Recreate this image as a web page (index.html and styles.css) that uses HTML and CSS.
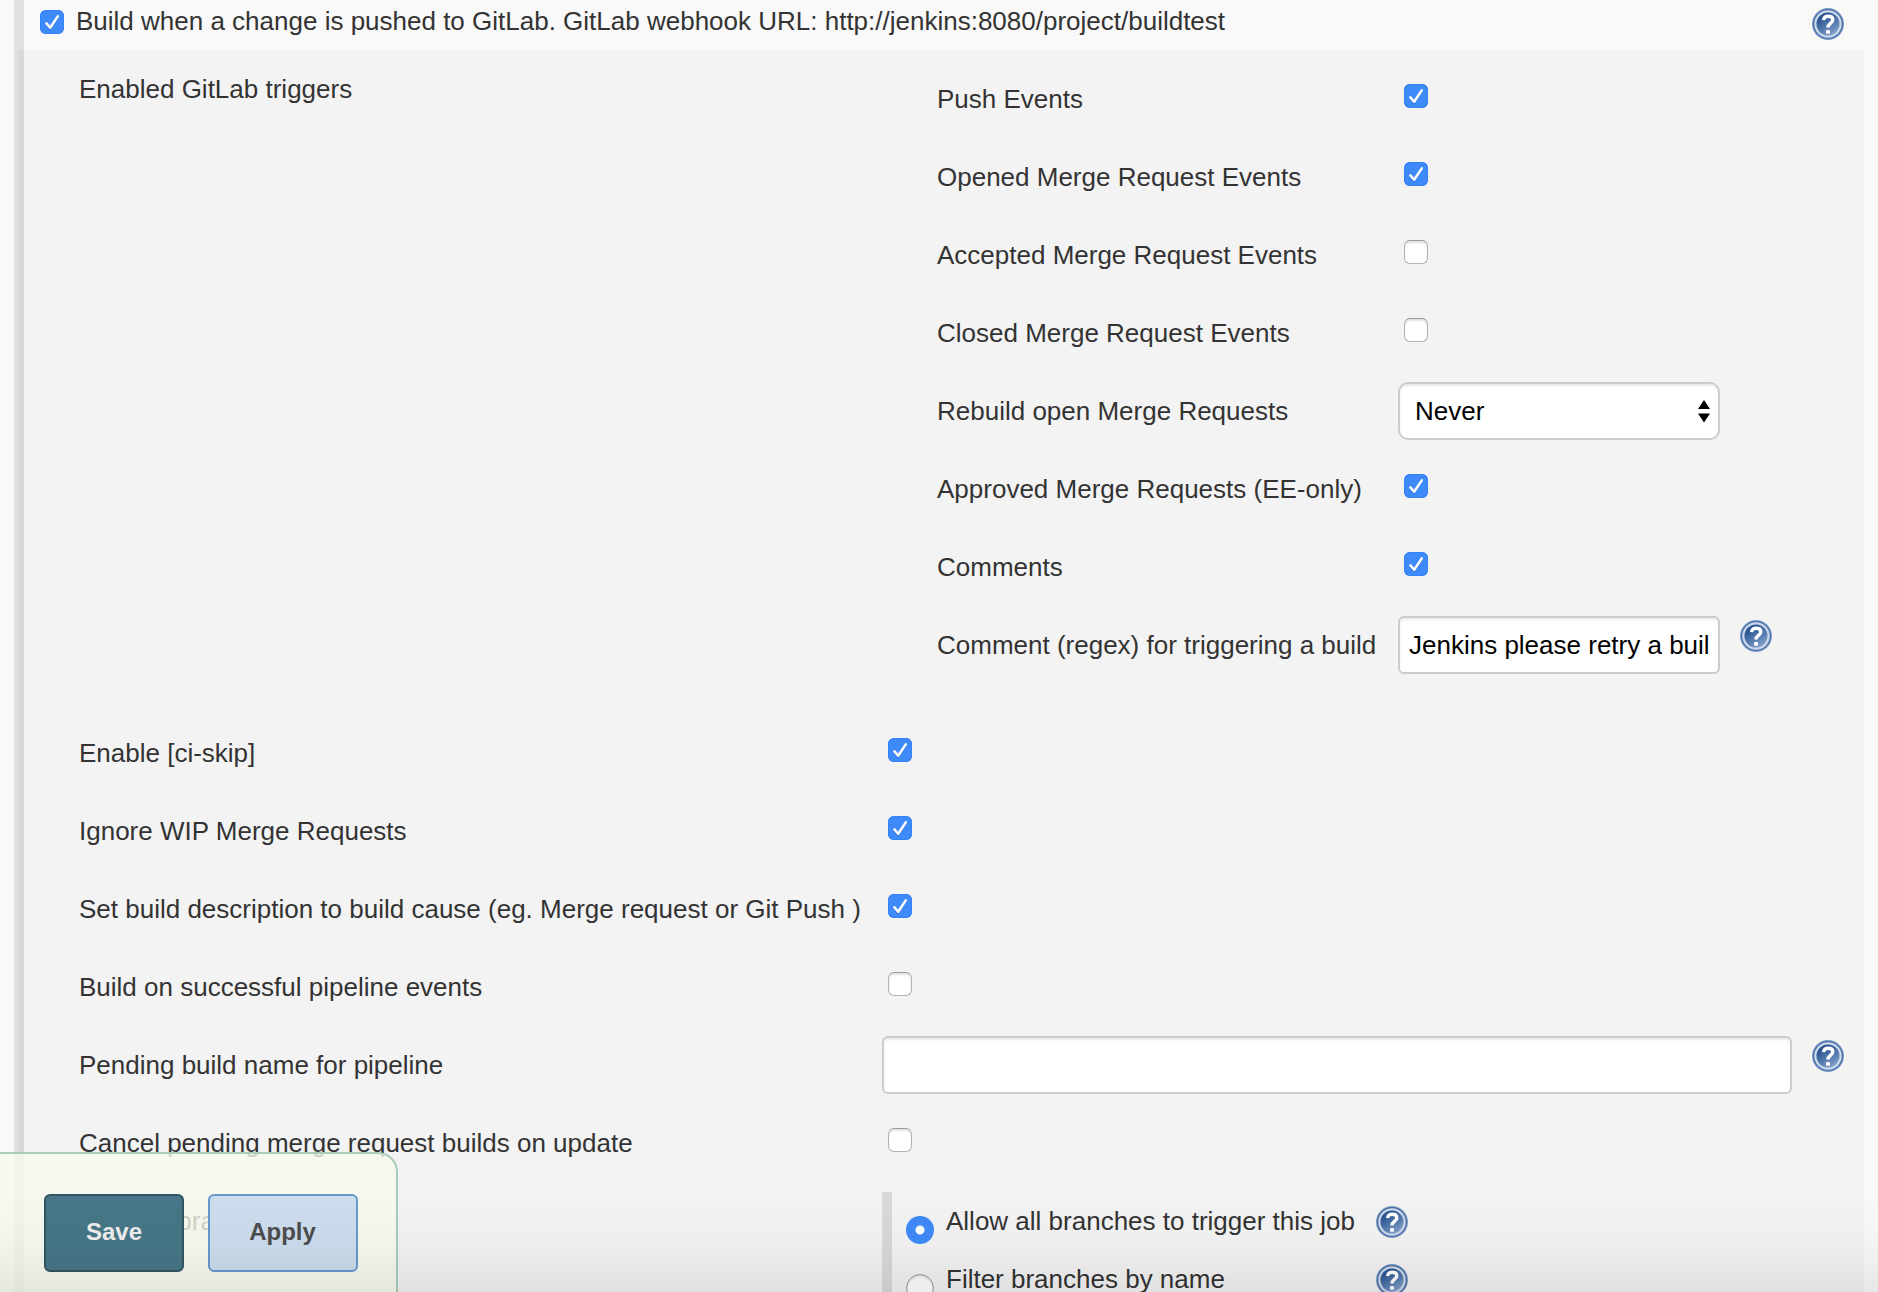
FILE: index.html
```html
<!DOCTYPE html>
<html lang="en">
<head>
<meta charset="utf-8">
<title>Build Triggers</title>
<link rel="stylesheet" href="styles.css">
</head>
<body>
<svg class="defs" width="0" height="0" aria-hidden="true">
  <defs>
    <linearGradient id="help-fill" x1="0.2" y1="0" x2="0.8" y2="1">
      <stop offset="0.2" stop-color="#2c5693"/>
      <stop offset="0.55" stop-color="#5379ae"/>
      <stop offset="1" stop-color="#90acd2"/>
    </linearGradient>
    <symbol id="tick" viewBox="0 0 24 24">
      <path d="M6.4 14.4L10.2 18.9L17.8 7.2" fill="none" stroke="#1f62c4" stroke-opacity=".5" stroke-width="2.4" stroke-linecap="round" stroke-linejoin="round"/>
      <path d="M6.4 13.4L10.2 17.8L17.8 6.4" fill="none" stroke="#fff" stroke-width="2.5" stroke-linecap="round" stroke-linejoin="round"/>
    </symbol>
    <symbol id="help" viewBox="0 0 32 32">
      <circle cx="16" cy="16" r="16" fill="#7f9cc5"/>
      <circle cx="16" cy="16" r="15" fill="#4a70a8"/>
      <circle cx="16" cy="16" r="12.6" fill="url(#help-fill)" stroke="#cdd9ea" stroke-width="2.2"/>
      <path d="M11.6 12.2C11.8 9.2 13.6 8.2 16.2 8.2C19 8.2 20.8 9.6 20.8 11.9C20.8 15.2 16 15.2 16 19.6" fill="none" stroke="#fff" stroke-width="3.4"/>
      <rect x="14" y="22" width="4" height="3.8" rx="1" fill="#fff"/>
    </symbol>
    <symbol id="updown" viewBox="0 0 12 24">
      <path d="M6 1L12 10H0ZM0 14.5H12L6 23.5Z" fill="#000"/>
    </symbol>
  </defs>
</svg>

<main class="page">
  <header class="trigger">
    <span class="check on"><svg><use href="#tick"/></svg></span>
    <span class="trigger-label">Build when a change is pushed to GitLab. GitLab webhook URL: http://jenkins:8080/project/buildtest</span>
    <svg class="help"><use href="#help"/></svg>
  </header>

  <section class="panel">
    <div class="row group">
      <div class="label">Enabled GitLab triggers</div>
      <div class="nested">
        <div class="row"><div class="label">Push Events</div><div class="control"><span class="check on"><svg><use href="#tick"/></svg></span></div></div>
        <div class="row"><div class="label">Opened Merge Request Events</div><div class="control"><span class="check on"><svg><use href="#tick"/></svg></span></div></div>
        <div class="row"><div class="label">Accepted Merge Request Events</div><div class="control"><span class="check"></span></div></div>
        <div class="row"><div class="label">Closed Merge Request Events</div><div class="control"><span class="check"></span></div></div>
        <div class="row"><div class="label">Rebuild open Merge Requests</div><div class="field"><div class="select">Never<svg><use href="#updown"/></svg></div></div></div>
        <div class="row"><div class="label">Approved Merge Requests (EE-only)</div><div class="control"><span class="check on"><svg><use href="#tick"/></svg></span></div></div>
        <div class="row"><div class="label">Comments</div><div class="control"><span class="check on"><svg><use href="#tick"/></svg></span></div></div>
        <div class="row"><div class="label">Comment (regex) for triggering a build</div><div class="field"><div class="input">Jenkins please retry a buil</div><svg class="help"><use href="#help"/></svg></div></div>
      </div>
    </div>
    <div class="row"><div class="label">Enable [ci-skip]</div><div class="control"><span class="check on"><svg><use href="#tick"/></svg></span></div></div>
    <div class="row"><div class="label">Ignore WIP Merge Requests</div><div class="control"><span class="check on"><svg><use href="#tick"/></svg></span></div></div>
    <div class="row"><div class="label">Set build description to build cause (eg. Merge request or Git Push )</div><div class="control"><span class="check on"><svg><use href="#tick"/></svg></span></div></div>
    <div class="row"><div class="label">Build on successful pipeline events</div><div class="control"><span class="check"></span></div></div>
    <div class="row"><div class="label">Pending build name for pipeline</div><div class="field wide"><div class="input"></div><svg class="help"><use href="#help"/></svg></div></div>
    <div class="row"><div class="label">Cancel pending merge request builds on update</div><div class="control"><span class="check"></span></div></div>
    <div class="row">
      <div class="label">Allowed branches</div>
      <div class="options">
        <div class="option"><span class="radio on"></span><span class="option-label">Allow all branches to trigger this job</span><svg class="help"><use href="#help"/></svg></div>
        <div class="option"><span class="radio"></span><span class="option-label">Filter branches by name</span><svg class="help"><use href="#help"/></svg></div>
      </div>
    </div>
  </section>
</main>

<footer class="actions">
  <button class="button save" type="button">Save</button>
  <button class="button apply" type="button">Apply</button>
</footer>
<div class="bottom-shade"></div>
</body>
</html>
```

FILE: styles.css
```css
* { box-sizing: border-box; }

body {
  margin: 0;
  height: 1292px;
  overflow: hidden;
  background: #f9f9f9;
  color: #333;
  font: 26px/30px "Liberation Sans", Arial, Helvetica, sans-serif;
}

.defs { position: absolute; }
svg { display: block; }

.page {
  height: 1292px;
  margin-left: 14px;
  border-left: 4px solid #e0e0e0;
  overflow: hidden;
}

.trigger {
  display: flex;
  align-items: flex-start;
  height: 50px;
  padding: 6px 34px 0 16px;
  border-left: 6px solid #e0e0e0;
}
.trigger .check { margin-top: 4px; }
.trigger-label { flex: 1; margin-left: 12px; white-space: nowrap; }
.trigger .help { margin-top: 2px; }

.panel {
  width: 1846px;
  height: 1300px;
  border-left: 6px solid #d9d9d9;
  background: #f3f3f3;
}

.row {
  display: grid;
  grid-template-columns: 803px 1fr;
  height: 78px;
  padding-left: 55px;
}
.group { height: 664px; }
.label { padding-top: 24px; white-space: nowrap; }
.control { padding: 24px 0 0 6px; }

.nested { padding: 10px 0 0 55px; }
.nested .row { grid-template-columns: 461px 1fr; padding-left: 0; }

.check {
  display: block;
  flex: none;
  width: 24px;
  height: 24px;
  border: 1px solid #b2b2b2;
  border-top-color: #999;
  border-radius: 6px;
  background: #fff;
  box-shadow: inset 0 2px 2px #e2e2e2;
}
.check.on { border: 0; background: #3f8af9; box-shadow: inset 0 0 0 1px #3582f6; }
.check svg { width: 24px; height: 24px; }

.help { flex: none; width: 32px; height: 32px; }

.field { display: flex; align-items: flex-start; gap: 20px; padding-top: 10px; }
.field .help { margin-top: 4px; }

.input, .select {
  width: 322px;
  height: 58px;
  padding: 12px 9px;
  border: 2px solid #ccc;
  border-radius: 6px;
  background: #fff;
  box-shadow: inset 0 2px 2px #ececec;
  color: #000;
  white-space: nowrap;
}
.wide .input { width: 910px; }
.select {
  display: flex;
  justify-content: space-between;
  align-items: flex-start;
  padding: 12px 8px 0 15px;
  border-radius: 10px;
}
.select svg { width: 12px; height: 24px; margin-top: 3px; }

.options {
  height: 130px;
  margin-top: 10px;
  border-left: 10px solid #d9d9d9;
}
.option { display: flex; align-items: flex-start; height: 58px; padding: 14px 0 0 14px; }
.option-label { width: 430px; margin-left: 12px; white-space: nowrap; }
.radio {
  width: 28px;
  height: 28px;
  margin-top: 10px;
  border: 1px solid #999;
  border-radius: 50%;
  background: #fff;
  box-shadow: inset 0 2px 2px #e2e2e2;
}
.radio.on {
  border: 0;
  background: radial-gradient(circle, #fff 4px, #3f8af9 5px);
  box-shadow: none;
}

.actions {
  position: fixed;
  left: 0;
  bottom: 0;
  display: flex;
  gap: 24px;
  width: 398px;
  height: 140px;
  padding: 40px 0 0 44px;
  border: solid #a9cdb9;
  border-width: 2px 2px 0 0;
  border-radius: 0 20px 0 0;
  background: rgba(246, 250, 238, .8);
}
.button {
  height: 78px;
  padding: 0 0 2px;
  border: 2px solid;
  border-radius: 6px;
  font: bold 24px/30px "Liberation Sans", Arial, Helvetica, sans-serif;
}
.save { width: 140px; border-color: #335563; background: #477788; color: #eee; }
.apply { width: 150px; padding-right: 1px; border-color: #6699cc; background: #cddded; color: #4d4d4d; }

.bottom-shade {
  position: fixed;
  left: 0;
  right: 0;
  bottom: 0;
  height: 100px;
  background: linear-gradient(rgba(0, 0, 0, 0), rgba(0, 0, 0, .02) 50%, rgba(0, 0, 0, .07));
}
```
